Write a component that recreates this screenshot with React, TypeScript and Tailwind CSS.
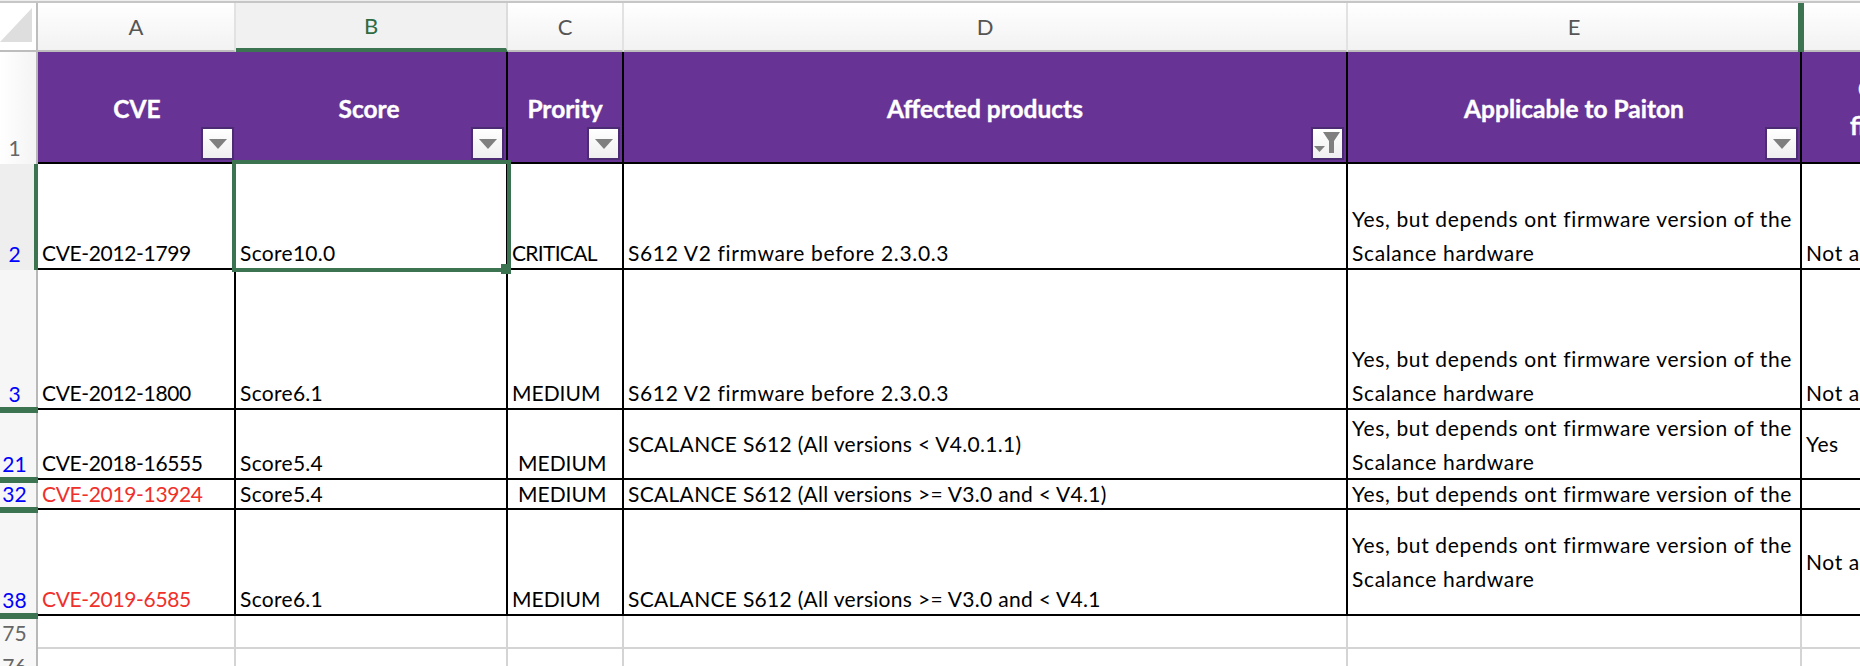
const yesLine = "Yes, but depends ont firmware version of the";

type Align = "end" | "center" | "start";

const yesTrack = "tracking-[0.65px]";
const firmwareTrack = "tracking-[0.65px]";
const scalanceTrack = "tracking-[0.3px]";
const cveTrack = "tracking-[-0.35px]";
const scoreTrack = "tracking-[0.3px]";

const FilterButton = ({ active }: { active?: boolean }) => (
  <span className="absolute right-[2px] bottom-[2px] z-10 flex h-[33px] w-[33px] items-center justify-center border-2 border-[#4b2c72] bg-gradient-to-b from-white to-[#efefef]">
    {active ? (
      <svg width="27" height="25" viewBox="0 0 27 25">
        <path d="M0 15h11l-5.500 6z" fill="#7f7f7f" />
        <path d="M9 1h17l-6 9v12h-5V10z" fill="#7f7f7f" />
      </svg>
    ) : (
      <svg width="18" height="10" viewBox="0 0 18 10">
        <path d="M0 0h18l-9 10z" fill="#7f7f7f" />
      </svg>
    )}
  </span>
);

const ColHead = ({ label, selected }: { label: string; selected?: boolean }) => (
  <div
    className={
      selected
        ? "flex items-center justify-center border-b-4 border-r-2 border-b-[#3c7350] border-r-[#dcdcdc] bg-[#f1f1f1] text-[22px] text-[#2f6b43]"
        : "flex items-center justify-center border-b-2 border-r-2 border-b-[#bdbdbd] border-r-[#e2e2e2] bg-gradient-to-b from-white to-[#f2f2f2] text-[22px] text-[#555555]"
    }
  >
    {label}
  </div>
);

const Head = ({
  label,
  active,
  noRule,
  labelClass,
}: {
  label: string;
  active?: boolean;
  noRule?: boolean;
  labelClass?: string;
}) => (
  <div
    className={
      noRule
        ? "relative flex items-center justify-center border-b-2 border-black bg-[#673495] pt-[4px] text-[24.5px] font-bold text-white [-webkit-text-stroke:0.4px_white]"
        : "relative flex items-center justify-center border-b-2 border-r-2 border-black bg-[#673495] pt-[4px] text-[24.5px] font-bold text-white [-webkit-text-stroke:0.4px_white]"
    }
  >
    <span className={labelClass}>{label}</span>
    <FilterButton active={active} />
  </div>
);

const RowNum = ({ n, bar }: { n: number; bar?: boolean }) => (
  <div className="relative flex items-end justify-center border-r-2 border-[#b8b8b8] bg-[#f6f6f6] pr-[7px] text-[21px] leading-[34px] text-[#0000ff]">
    <span className="-mb-[1px]">{n}</span>
    {bar && <span className="absolute -right-[2px] -bottom-[3px] left-0 z-10 h-[6px] bg-[#3c7350]" />}
  </div>
);

const Cell = ({
  children,
  align = "end",
  red,
  indent,
  track,
}: {
  children?: React.ReactNode;
  align?: Align;
  red?: boolean;
  indent?: boolean;
  track?: string;
}) => {
  const place = align === "end" ? "justify-end" : align === "center" ? "justify-center" : "justify-start";
  const nudge = align === "end" ? "-mb-[2px]" : align === "start" ? "mt-[1px]" : "";
  return (
    <div
      className={`flex flex-col overflow-hidden border-r-2 border-b-2 border-black ${place} ${indent ? "pl-[10px]" : "pl-[4px]"} pr-[2px] text-[21px] leading-[34px] ${red ? "text-[#f0302a]" : "text-black"}`}
    >
      <span className={`${nudge} ${track ?? ""}`}>{children}</span>
    </div>
  );
};

const LastCell = ({ children, align = "end" }: { children?: React.ReactNode; align?: Align }) => (
  <div
    className={`flex flex-col overflow-hidden whitespace-nowrap border-b-2 border-black pl-[4px] text-[21px] leading-[34px] tracking-[0.6px] text-black ${align === "center" ? "justify-center" : "justify-end"}`}
  >
    <span className={align === "end" ? "-mb-[2px]" : ""}>{children}</span>
  </div>
);

const BlankRow = ({ n }: { n: number }) => (
  <>
    <div className="flex items-end justify-center border-r-2 border-[#b8b8b8] bg-[#f8f8f8] pr-[7px] text-[21px] leading-[32px] text-[#666666]">
      {n}
    </div>
    <div className="border-r-2 border-b-2 border-[#d4d4d4]" />
    <div className="border-r-2 border-b-2 border-[#d4d4d4]" />
    <div className="border-r-2 border-b-2 border-[#d4d4d4]" />
    <div className="border-r-2 border-b-2 border-[#d4d4d4]" />
    <div className="border-r-2 border-b-2 border-[#d4d4d4]" />
    <div className="border-b-2 border-[#d4d4d4]" />
  </>
);

export default function App() {
  return (
    <div className="h-[666px] w-[1860px] overflow-hidden bg-white font-['Lato',sans-serif]">
      <div className="h-[3px] border-t border-t-[#eeeeee] bg-[#c6c6c6]" />
      <div className="grid grid-cols-[38px_198px_272px_116px_724px_454px_58px] grid-rows-[49px_112px_106px_140px_70px_30px_106px_33px_33px]">
        {/* column letters */}
        <div className="flex items-center justify-center border-r-2 border-b-2 border-[#bdbdbd] bg-white">
          <svg width="32" height="36" viewBox="0 0 32 36" className="-mt-[2px] mr-[4px]">
            <path d="M32 0v34H0z" fill="#dedede" />
          </svg>
        </div>
        <ColHead label="A" />
        <ColHead label="B" selected />
        <ColHead label="C" />
        <ColHead label="D" />
        <div className="relative">
          <div className="flex h-full items-center justify-center border-b-2 border-b-[#bdbdbd] bg-gradient-to-b from-white to-[#f2f2f2] pr-[2px] text-[22px] text-[#555555]">
            E
          </div>
          <span className="absolute -right-[2px] top-0 bottom-0 w-[6px] bg-[#3c7350]" />
        </div>
        <div className="border-b-2 border-b-[#bdbdbd] bg-gradient-to-b from-white to-[#f2f2f2]" />

        {/* header row */}
        <div className="flex items-end justify-center border-r-2 border-[#b8b8b8] bg-gradient-to-r from-white to-[#f4f4f4] pr-[7px] text-[21px] leading-[32px] text-[#666666]">
          1
        </div>
        <Head label="CVE" noRule />
        <Head label="Score" labelClass="mr-[4px]" />
        <Head label="Prority" />
        <Head label="Affected products" active />
        <Head label="Applicable to Paiton" />
        <div className="flex flex-col justify-center overflow-hidden border-b-2 border-black bg-[#673495] text-[24.5px] font-bold leading-[37px] text-white [-webkit-text-stroke:0.4px_white]">
          <span className="pl-[56px]">C</span>
          <span className="pl-[48px]">fi</span>
        </div>

        {/* row 2 */}
        <div className="relative flex items-end justify-center border-r-4 border-[#3c7350] bg-[#eeeeee] pr-[5px] text-[21px] leading-[34px] text-[#0000ff]">
          <span className="-mb-[1px]">2</span>
        </div>
        <Cell track={cveTrack}>CVE-2012-1799</Cell>
        <div className="relative flex flex-col justify-end border-r-2 border-b-2 border-black pl-[4px] text-[21px] leading-[34px]">
          <span className={`-mb-[2px] ${scoreTrack}`}>Score10.0</span>
          <span className="absolute -top-[4px] -right-[5px] -bottom-[4px] -left-[4px] z-20 border-4 border-[#3c7350]" />
          <span className="absolute -right-[5px] -bottom-[6px] z-30 h-[10px] w-[10px] bg-[#3c7350]" />
        </div>
        <Cell track="tracking-[-0.7px]">CRITICAL</Cell>
        <Cell track={firmwareTrack}>S612 V2 firmware before 2.3.0.3</Cell>
        <Cell track={yesTrack}>{yesLine} Scalance hardware</Cell>
        <LastCell>Not applicable</LastCell>

        {/* row 3 */}
        <RowNum n={3} bar />
        <Cell track={cveTrack}>CVE-2012-1800</Cell>
        <Cell track={scoreTrack}>Score6.1</Cell>
        <Cell>MEDIUM</Cell>
        <Cell track={firmwareTrack}>S612 V2 firmware before 2.3.0.3</Cell>
        <Cell track={yesTrack}>{yesLine} Scalance hardware</Cell>
        <LastCell>Not applicable</LastCell>

        {/* row 21 */}
        <RowNum n={21} bar />
        <Cell track={cveTrack}>CVE-2018-16555</Cell>
        <Cell track={scoreTrack}>Score5.4</Cell>
        <Cell indent>MEDIUM</Cell>
        <Cell align="center" track={scalanceTrack}>
          SCALANCE S612 (All versions &lt; V4.0.1.1)
        </Cell>
        <Cell align="start" track={yesTrack}>
          {yesLine} Scalance hardware
        </Cell>
        <LastCell align="center">Yes</LastCell>

        {/* row 32 */}
        <RowNum n={32} bar />
        <Cell align="center" red track={cveTrack}>
          CVE-2019-13924
        </Cell>
        <Cell align="center" track={scoreTrack}>
          Score5.4
        </Cell>
        <Cell align="center" indent>
          MEDIUM
        </Cell>
        <Cell align="center" track={scalanceTrack}>
          SCALANCE S612 (All versions &gt;= V3.0 and &lt; V4.1)
        </Cell>
        <Cell align="center" track={yesTrack}>
          {yesLine}
        </Cell>
        <LastCell />

        {/* row 38 */}
        <RowNum n={38} bar />
        <Cell red track={cveTrack}>
          CVE-2019-6585
        </Cell>
        <Cell track={scoreTrack}>Score6.1</Cell>
        <Cell>MEDIUM</Cell>
        <Cell track={scalanceTrack}>SCALANCE S612 (All versions &gt;= V3.0 and &lt; V4.1</Cell>
        <Cell align="center" track={yesTrack}>
          {yesLine} Scalance hardware
        </Cell>
        <LastCell align="center">Not applicable</LastCell>

        <BlankRow n={75} />
        <BlankRow n={76} />
      </div>
    </div>
  );
}
